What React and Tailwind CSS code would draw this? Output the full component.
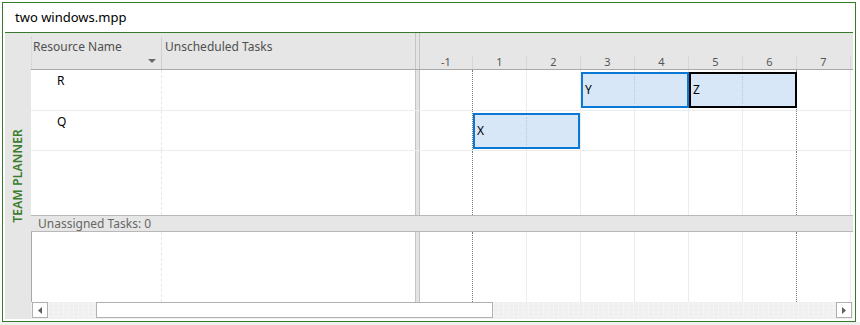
import React from "react";

const days = ["-1", "1", "2", "3", "4", "5", "6", "7"];

// border style of each day column in the chart body
const dayLine = (i) =>
  i === 0 || i === 6
    ? "border-r border-dotted border-r-[#7a7a7a]"
    : "border-r border-r-[#ececec]";

const DayColumns = () => (
  <div className="flex h-full">
    {days.map((d, i) => (
      <div key={d} className={`${i === 0 ? "w-[53px]" : "w-[54px]"} h-full shrink-0 ${dayLine(i)}`} />
    ))}
  </div>
);

const Splitter = () => (
  <div className="w-[5px] shrink-0 h-full border-x border-[#c4c4c4] bg-[#e4e4e4]" />
);

const Bar = ({ label, left, top, width, dark, tick }) => (
  <div
    className={`absolute h-[36px] flex items-center pl-[2px] text-[12px] text-black bg-[#d7e7f7] border-2 ${
      dark ? "border-black" : "border-[#0a78d4]"
    }`}
    style={{ left, top, width }}
  >
    {label}
    <span
      className="absolute top-[2px] bottom-[2px] border-l border-dotted border-[#b9c8d6]"
      style={{ left: tick }}
    />
  </div>
);

const Row = ({ height, name, border }) => (
  <div className={`flex shrink-0 ${border ? "border-b border-[#ececec]" : ""}`} style={{ height }}>
    <div className="w-[130px] shrink-0 pl-[26px] pt-[3px] text-[12px] leading-[16px] text-black">
      {name}
    </div>
    <div className="w-px shrink-0 border-l border-dashed border-[#e6e6e6]" />
    <div className="w-[253px] shrink-0" />
    <Splitter />
    <div className="relative w-[433px] shrink-0">
      <DayColumns />
    </div>
  </div>
);

const App = () => {
  return (
    <div className="w-[860px] h-[325px] bg-white flex flex-col font-['Noto_Sans','DejaVu_Sans',sans-serif] overflow-hidden">
      <div className="ml-[2px] mt-[2px] w-[854px] h-[320px] border border-[#367a2c] p-[2px] flex flex-col">
        <div className="h-[28px] shrink-0 border-b border-[#367a2c] flex items-center pl-[10px] pb-[1px] text-[13px] text-black">
          two windows.mpp
        </div>
        <div className="flex flex-1 min-h-0">
          <div className="w-[26px] shrink-0 bg-[#e6e6e6] flex items-center justify-center">
            <span className="[writing-mode:vertical-rl] rotate-180 text-[12px] font-semibold tracking-[0.2px] text-[#3a7d2c]">
              TEAM PLANNER
            </span>
          </div>
          <div className="relative w-[822px] flex flex-col">
            {/* header */}
            <div className="h-[37px] shrink-0 flex items-end bg-[#e6e6e6] border-b border-[#a9a9a9]">
              <div className="w-px h-[32px] shrink-0 border-l border-dotted border-[#cfcfcf]" />
              <div className="w-[129px] h-[32px] shrink-0 flex flex-col pl-[1px] pt-[2px]">
                <span className="text-[12px] leading-[16px] text-[#505050]">Resource Name</span>
                <svg className="self-end mr-[5px] mt-[4px]" width="8" height="4" viewBox="0 0 8 4">
                  <polygon points="0,0 8,0 4,4" fill="#6a6a6a" />
                </svg>
              </div>
              <div className="w-px h-[32px] shrink-0 bg-[#cfcfcf]" />
              <div className="w-[253px] h-[32px] shrink-0 pl-[3px] pt-[2px] text-[12px] leading-[16px] text-[#505050]">
                Unscheduled Tasks
              </div>
              <Splitter />
              <div className="w-[433px] shrink-0 flex items-end">
                {days.map((d, i) => (
                  <div
                    key={d}
                    className={`${i === 0 ? "w-[53px]" : "w-[54px]"} h-[13px] shrink-0 border-r border-[#d6d6d6] text-center text-[11px] leading-[12px] text-[#555]`}
                  >
                    {d}
                  </div>
                ))}
              </div>
            </div>

            <Row height={41} name="R" border />
            <Row height={40} name="Q" border />
            <Row height={64} name="" />

            {/* task bars laid over the chart rows */}
            <Bar label="Y" left={581 - 31} top={39} width={108} tick={51} />
            <Bar label="Z" left={689 - 31} top={39} width={108} dark tick={51} />
            <Bar label="X" left={473 - 31} top={80} width={107} tick={51} />

            <div className="h-[17px] shrink-0 bg-[#e6e6e6] border-y border-[#b8b8b8] pl-[7px] text-[12px] leading-[15px] text-[#666]">
              Unassigned Tasks: 0
            </div>

            <div className="flex h-[70px] shrink-0">
              <div className="w-px shrink-0 bg-[#a8a8a8]" />
              <div className="w-[129px] shrink-0" />
              <div className="w-px shrink-0 border-l border-dashed border-[#e6e6e6]" />
              <div className="w-[253px] shrink-0" />
              <Splitter />
              <div className="w-[433px] shrink-0">
                <DayColumns />
              </div>
            </div>

            {/* horizontal scrollbar */}
            <div className="h-[17px] shrink-0 flex items-start bg-[#f0f0f0] bg-[radial-gradient(circle,#fafafa_0.8px,transparent_1px)] bg-[length:5px_4px]">
              <div className="ml-[1px] w-[16px] h-[16px] shrink-0 bg-white border border-[#b0b0b0] flex items-center justify-center">
                <svg width="4" height="7" viewBox="0 0 4 7">
                  <polygon points="4,0 4,7 0,3.5" fill="#606060" />
                </svg>
              </div>
              <div className="ml-[48px] w-[397px] h-[16px] shrink-0 bg-white border border-[#b0b0b0]" />
              <div className="ml-auto mr-[1px] w-[16px] h-[16px] shrink-0 bg-white border border-[#b0b0b0] flex items-center justify-center">
                <svg width="4" height="7" viewBox="0 0 4 7">
                  <polygon points="0,0 0,7 4,3.5" fill="#606060" />
                </svg>
              </div>
            </div>
          </div>
        </div>
      </div>
      <div className="flex-1 bg-[#f0f0f0]" />
    </div>
  );
};

export default App;
